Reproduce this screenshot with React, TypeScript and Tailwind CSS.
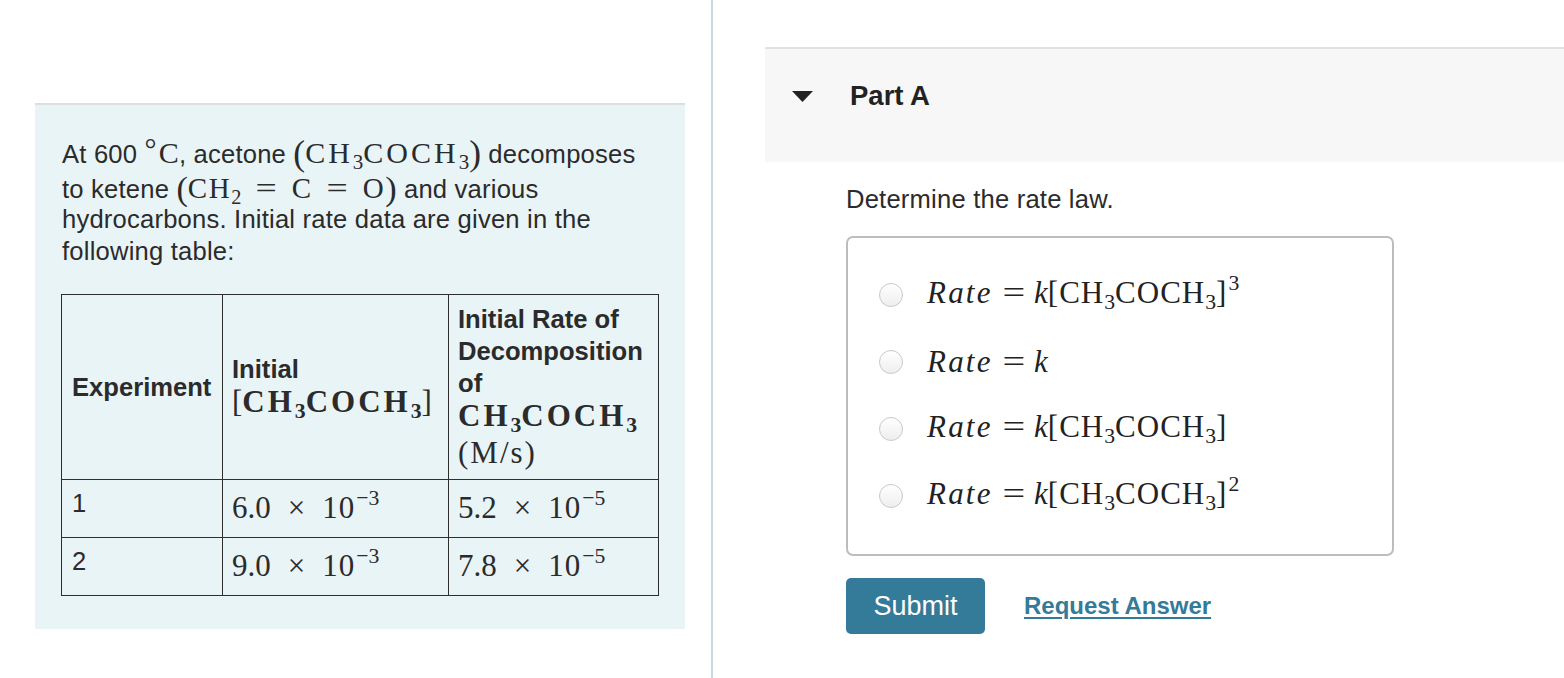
import React from "react";

const Sub = ({ children }: { children: React.ReactNode }) => (
  <span className="relative top-[0.28em] text-[0.7em] tracking-normal">{children}</span>
);
const Sup = ({ children }: { children: React.ReactNode }) => (
  <span className="relative -top-[0.62em] ml-[1px] text-[0.7em] tracking-normal">{children}</span>
);

const Serif = ({ children, className = "" }: { children: React.ReactNode; className?: string }) => (
  <span className={"font-['Liberation_Serif','Times_New_Roman',serif] whitespace-nowrap " + className}>{children}</span>
);

const BigParen = ({ c }: { c: string }) => (
  <span className="relative top-[0.06em] text-[1.18em] tracking-normal">{c}</span>
);

const Eq = ({ className = "" }: { className?: string }) => (
  <span className={"inline-block scale-x-[1.3] tracking-normal " + className}>=</span>
);

const Acetone = ({ bold = false, track = "tracking-[2px]" }: { bold?: boolean; track?: string }) => (
  <span className={bold ? "font-bold tracking-[3px]" : track}>
    CH<Sub>3</Sub>COCH<Sub>3</Sub>
  </span>
);

const Radio = () => (
  <span className="inline-block w-[24px] h-[24px] rounded-full border border-[#c9c9c9] bg-linear-to-b from-white to-[#eeeeee] shrink-0" />
);

const Option = ({ children }: { children: React.ReactNode }) => (
  <div className="h-[67px] flex items-center">
    <Radio />
    <span className="ml-[24px] text-[31px] leading-[40px] text-[#222]">{children}</span>
  </div>
);

const RateEq = ({ children }: { children?: React.ReactNode }) => (
  <Serif>
    <span className="italic tracking-[2.2px]">Rate</span>
    <Eq className="mx-[12px]" />
    <span className="italic">k</span>
    {children}
  </Serif>
);

const Sci = ({ a, e }: { a: string; e: string }) => (
  <Serif className="text-[31px] leading-[32px]">
    {a}
    <span className="mx-[17px]">×</span>
    <span className="tracking-[1px]">10</span>
    <Sup>{e}</Sup>
  </Serif>
);

export default function App() {
  return (
    <div className="w-[1564px] h-[678px] bg-white flex overflow-hidden font-['Liberation_Sans',Arial,sans-serif] text-[#2b2b2b]">
      {/* Left column */}
      <div className="w-[711px] shrink-0 pt-[103px] pl-[35px]">
        <div className="w-[650px] h-[526px] border-t-2 border-[#dcdfe0] bg-[#e9f4f7] pl-[26px] pt-[29px]">
          <div className="text-[25.6px] text-[#2b2b2b] pl-[1px] tracking-[0.2px]">
            <div className="h-[36px] leading-[36px]">
              At 600{" "}
              <Serif className="text-[30px] leading-none">
                <span className="relative -top-[0.12em] mr-[2px]">°</span>C
              </Serif>
              , acetone{" "}
              <Serif className="text-[30px] leading-none">
                <BigParen c="(" />
                <Acetone track="tracking-[3px]" />
                <BigParen c=")" />
              </Serif>{" "}
              decomposes
            </div>
            <div className="h-[33px] leading-[33px]">
              to ketene{" "}
              <Serif className="text-[29px] leading-none tracking-[1.5px]">
                <BigParen c="(" />
                CH<Sub>2</Sub>
                <Eq className="mx-[17px]" />C<Eq className="mx-[17px]" />O
                <BigParen c=")" />
              </Serif>{" "}
              and various
            </div>
            <div className="h-[32px] leading-[32px]">hydrocarbons. Initial rate data are given in the</div>
            <div className="h-[32px] leading-[32px]">following table:</div>
          </div>

          <table className="table-fixed border-collapse mt-[27px] w-[597px] text-[25.6px] leading-[32px]">
            <colgroup>
              <col className="w-[161px]" />
              <col className="w-[226px]" />
              <col className="w-[210px]" />
            </colgroup>
            <tbody>
              <tr className="h-[185px]">
                <td className="border border-[#2e2e2e] px-[10px] align-middle font-bold">Experiment</td>
                <td className="border border-[#2e2e2e] pl-[9px] pr-0 align-middle">
                  <div className="font-bold leading-[32px]">Initial</div>
                  <div className="leading-[34px] text-[31px]">
                    <Serif>
                      [<Acetone bold />]
                    </Serif>
                  </div>
                </td>
                <td className="border border-[#2e2e2e] pl-[9px] pr-0 align-middle">
                  <div className="font-bold leading-[31px]">Initial Rate of</div>
                  <div className="font-bold leading-[32px]">Decomposition</div>
                  <div className="font-bold leading-[32px]">of</div>
                  <div className="leading-[34px] text-[31px]">
                    <Serif>
                      <Acetone bold />
                    </Serif>
                  </div>
                  <div className="leading-[34px] text-[31px]">
                    <Serif className="tracking-[2px]">(M/s)</Serif>
                  </div>
                </td>
              </tr>
              <tr className="h-[58px]">
                <td className="border border-[#2e2e2e] px-[10px] align-top pt-[7px]">1</td>
                <td className="border border-[#2e2e2e] pl-[9px] align-top pt-[12px]">
                  <Sci a="6.0" e="−3" />
                </td>
                <td className="border border-[#2e2e2e] pl-[9px] align-top pt-[12px]">
                  <Sci a="5.2" e="−5" />
                </td>
              </tr>
              <tr className="h-[58px]">
                <td className="border border-[#2e2e2e] px-[10px] align-top pt-[7px]">2</td>
                <td className="border border-[#2e2e2e] pl-[9px] align-top pt-[12px]">
                  <Sci a="9.0" e="−3" />
                </td>
                <td className="border border-[#2e2e2e] pl-[9px] align-top pt-[12px]">
                  <Sci a="7.8" e="−5" />
                </td>
              </tr>
            </tbody>
          </table>
        </div>
      </div>

      {/* Divider */}
      <div className="w-[2px] h-full bg-[#c9d6e4] shrink-0" />

      {/* Right column */}
      <div className="flex-1 pl-[52px] pt-[47px]">
        <div className="border-t-2 border-[#e1e1e1] bg-[#f7f7f7] h-[115px] pt-[31px]">
          <div className="h-[32px] flex items-center">
            <svg width="21" height="11" viewBox="0 0 21 11" className="ml-[27px]">
              <polygon points="0,0 21,0 10.5,11" fill="#222" />
            </svg>
            <span className="ml-[37px] text-[27.5px] leading-[32px] font-bold text-[#222]">Part A</span>
          </div>
        </div>

        <div className="pl-[81px]">
          <div className="mt-[21px] text-[25.6px] leading-[32px] text-[#2b2b2b] tracking-[0.2px]">Determine the rate law.</div>

          <div className="mt-[21px] w-[548px] h-[320px] border-2 border-[#bdbdbd] rounded-[7px] pl-[31px] pt-[23px]">
            <Option>
              <RateEq>
                <span className="tracking-[1px]">
                  [CH<Sub>3</Sub>COCH<Sub>3</Sub>]
                </span>
                <Sup>3</Sup>
              </RateEq>
            </Option>
            <Option>
              <RateEq />
            </Option>
            <Option>
              <RateEq>
                <span className="tracking-[1px]">
                  [CH<Sub>3</Sub>COCH<Sub>3</Sub>]
                </span>
              </RateEq>
            </Option>
            <Option>
              <RateEq>
                <span className="tracking-[1px]">
                  [CH<Sub>3</Sub>COCH<Sub>3</Sub>]
                </span>
                <Sup>2</Sup>
              </RateEq>
            </Option>
          </div>

          <div className="mt-[22px] flex items-center">
            <button className="w-[139px] h-[56px] rounded-[5px] bg-[#347a99] text-white text-[27px]">Submit</button>
            <a className="ml-[39px] text-[24px] font-bold text-[#347a99] underline underline-offset-[3px] decoration-2">
              Request Answer
            </a>
          </div>
        </div>
      </div>
    </div>
  );
}
